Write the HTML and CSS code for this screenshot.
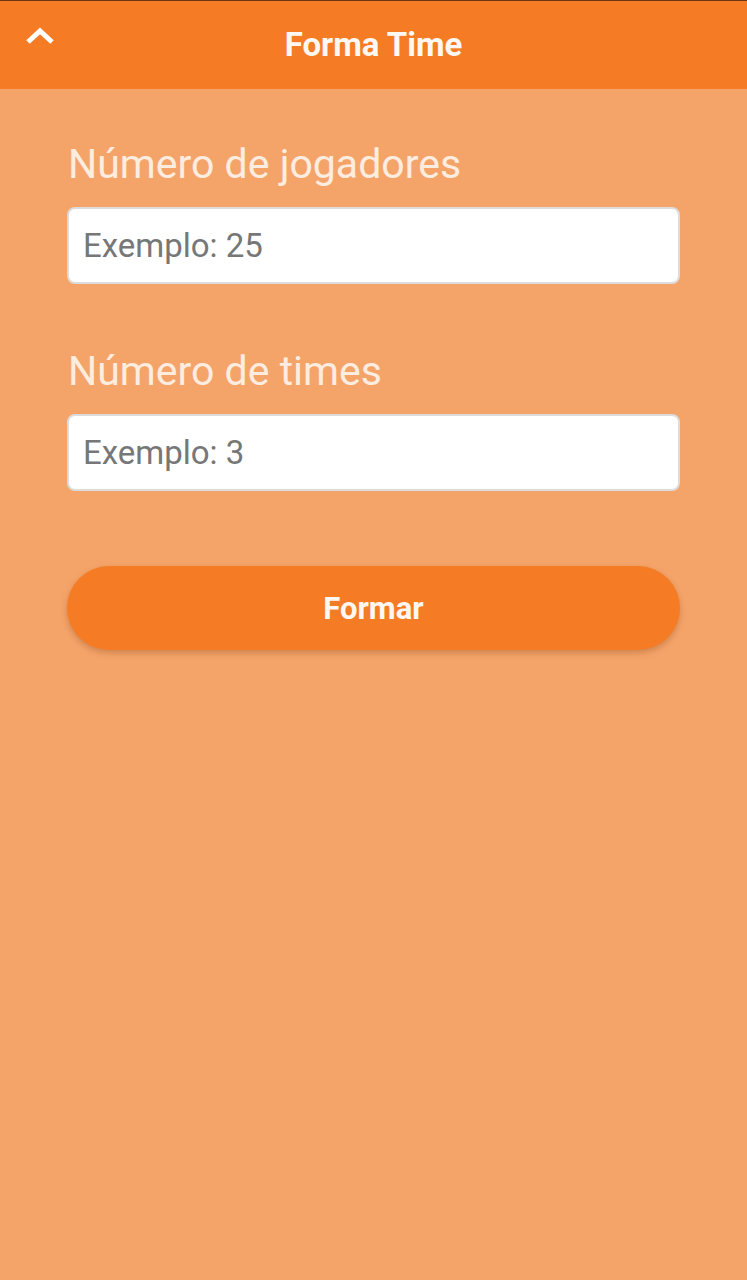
FILE: index.html
```html
<!DOCTYPE html>
<html lang="pt-BR">
<head>
	<meta charset="utf-8" />
	<title>Forma Time</title>
	<link rel="stylesheet" href="styles.css">
</head>
<body>
	<header class="topbar">
		<button class="back" aria-label="Voltar">
			<svg width="32" height="24" viewBox="0 0 32 24">
				<polyline points="4,19 16,8 28,19" fill="none" stroke="#fff" stroke-width="5" />
			</svg>
		</button>
		<h1 class="title">Forma Time</h1>
	</header>
	<main class="content">
		<div class="field">
			<label class="label" for="jogadores">Número de jogadores</label>
			<input class="entry" type="text" id="jogadores" placeholder="Exemplo: 25" />
		</div>
		<div class="field">
			<label class="label" for="times">Número de times</label>
			<input class="entry" type="text" id="times" placeholder="Exemplo: 3" />
		</div>
		<button class="submit">Formar</button>
	</main>
</body>
</html>
```

FILE: styles.css
```css
body {
	margin: 0;
	min-height: 1280px;
	background-color: #f5a469;
	font-family: Roboto, "Liberation Sans", sans-serif;
}

.topbar {
	position: relative;
	height: 88px;
	border-top: 1px solid #6b3414;
	background-color: #f57c24;
	display: flex;
	align-items: center;
	justify-content: center;
}

.back {
	position: absolute;
	left: 24px;
	top: 22px;
	padding: 0;
	border: none;
	background: none;
	line-height: 0;
	cursor: pointer;
}

.title {
	margin: 0 0 2px;
	color: #fff8f2;
	font-size: 33px;
	font-weight: bold;
}

.content {
	padding: 51px 67px 0;
	display: flex;
	flex-direction: column;
}

.field {
	display: flex;
	flex-direction: column;
	margin-bottom: 63px;
}

.label {
	color: #fdede0;
	font-size: 41px;
	line-height: 48px;
	margin: 0 0 19px 1px;
}

.entry {
	box-sizing: border-box;
	height: 77px;
	padding: 0 14px;
	border: 2px solid #dcdcdc;
	border-radius: 8px;
	background-color: #fff;
	color: #333;
	font-family: Roboto, sans-serif;
	font-size: 33px;
	outline: none;
}

.entry::placeholder {
	color: #777;
}

.submit {
	margin-top: 12px;
	height: 84px;
	border: none;
	border-radius: 42px;
	background-color: #f57c24;
	color: #fff8f2;
	font-family: Roboto, sans-serif;
	font-size: 31px;
	font-weight: bold;
	box-shadow: 0 3px 6px rgba(120, 60, 20, 0.3);
	cursor: pointer;
}
```
